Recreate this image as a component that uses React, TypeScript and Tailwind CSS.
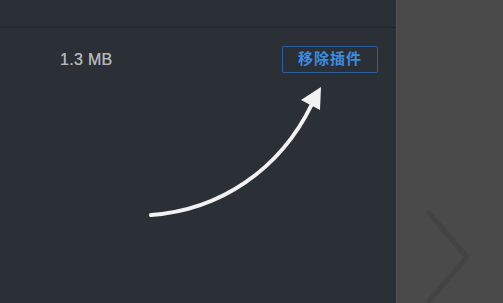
export default function App() {
  return (
    <div
      className="w-[503px] h-[303px] flex overflow-hidden"
      style={{ fontFamily: '"Liberation Sans", "Noto Sans CJK SC", sans-serif' }}
    >
      {/* Plugin panel */}
      <div className="relative w-[396px] h-full bg-[#2b2f36] flex flex-col">
        <div className="h-[28px] border-b border-[#22252b]" />
        <div className="flex items-center pl-[60px] pr-[18px] mt-[18px]">
          <span className="text-[16px] text-[#b3b6bb] tracking-[0.3px] [text-shadow:0_0_0.4px_#b3b6bb]">1.3 MB</span>
          <button className="ml-auto w-[96px] h-[27px] border border-[#2a5f9c] rounded-[2px] text-[15px] font-bold text-[#3b8de0] tracking-[1px] flex items-center justify-center">
            移除插件
          </button>
        </div>

        {/* Annotation arrow */}
        <svg className="absolute left-0 top-0 pointer-events-none" width="396" height="303" viewBox="0 0 396 303">
          <path
            d="M151 215 C 220 210 280 170 312 104"
            fill="none"
            stroke="#f2f2f2"
            strokeWidth={4}
            strokeLinecap="round"
          />
          <polygon points="321,87 301,100 320,110" fill="#f2f2f2" />
        </svg>
      </div>

      {/* Side pane */}
      <div className="flex-1 h-full bg-[#4a4a4a] border-l border-[#525252] flex items-end">
        <svg width="106" height="303" viewBox="396 0 106 303">
          <polyline
            points="428,213 466,257 428,301"
            fill="none"
            stroke="#434343"
            strokeWidth={5}
            strokeLinecap="round"
            strokeLinejoin="round"
          />
        </svg>
      </div>
    </div>
  );
}
